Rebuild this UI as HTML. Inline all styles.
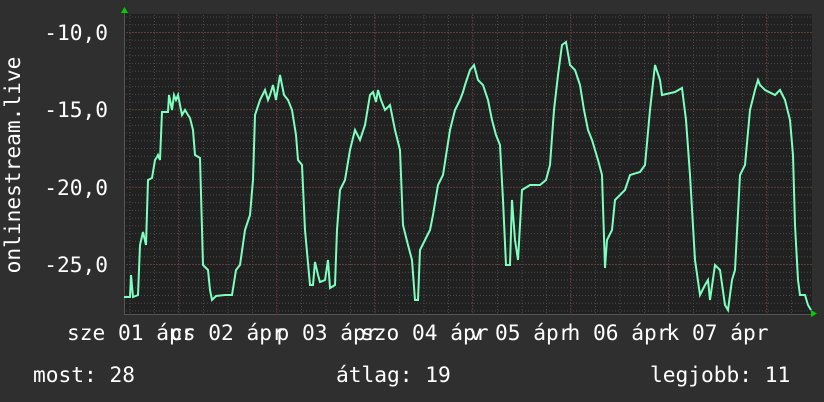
<!DOCTYPE html>
<html><head><meta charset="utf-8"><style>
html,body{margin:0;padding:0;background:#2f2f2f;}
body{width:824px;height:402px;position:relative;overflow:hidden;}
</style></head><body>
<svg width="824" height="402" style="position:absolute;left:0;top:0" font-family="DejaVu Sans Mono, Liberation Mono, monospace" font-size="21.2" fill="#fff">
<defs>
<pattern id="h" x="0" y="32" width="824" height="7.735" patternUnits="userSpaceOnUse">
<line x1="0" y1="0.5" x2="824" y2="0.5" stroke="#4a4a4a" stroke-width="1" stroke-dasharray="1,2"/>
</pattern>
<pattern id="v" x="129.5" y="0" width="24.5" height="402" patternUnits="userSpaceOnUse">
<line x1="0.5" y1="0" x2="0.5" y2="402" stroke="#4a4a4a" stroke-width="1" stroke-dasharray="1,2"/>
</pattern>
</defs>
<rect x="124" y="14" width="688" height="300" fill="#212121"/>
<rect x="124" y="14" width="688" height="300" fill="url(#h)"/>
<rect x="124" y="14" width="688" height="300" fill="url(#v)"/>
<g stroke="#6e3434" stroke-width="1" stroke-dasharray="1,2">
<line x1="124" y1="32.5" x2="812" y2="32.5"/>
<line x1="124" y1="109.5" x2="812" y2="109.5"/>
<line x1="124" y1="187.5" x2="812" y2="187.5"/>
<line x1="124" y1="264.5" x2="812" y2="264.5"/>
<line x1="178.5" y1="14" x2="178.5" y2="314"/>
<line x1="276.5" y1="14" x2="276.5" y2="314"/>
<line x1="374.5" y1="14" x2="374.5" y2="314"/>
<line x1="472.5" y1="14" x2="472.5" y2="314"/>
<line x1="570.5" y1="14" x2="570.5" y2="314"/>
<line x1="668.5" y1="14" x2="668.5" y2="314"/>
<line x1="766.5" y1="14" x2="766.5" y2="314"/>
</g>
<line x1="124" y1="314.5" x2="814" y2="314.5" stroke="#555"/>
<line x1="124.5" y1="12" x2="124.5" y2="314" stroke="#555"/>
<polygon points="121,13 128,13 124.5,7" fill="#00d000"/>
<polygon points="811,310 811,317 817,313.5" fill="#00d000"/>
<polyline fill="none" stroke="#7dffbf" stroke-width="2" points="124,297 130,297 131,275 133,297 138,295 140,245 143,232 146,245 148,180 152,178 155,160 157,157 158,155 160,160 162,112 168,112 169,95 172,110 174,95 176,100 178,95 180,105 182,115 185,110 188,115 190,118 193,130 195,155 200,158 203,265 206,268 208,270 210,290 212,300 216,296 225,295 232,295 236,270 240,265 245,230 250,215 253,180 255,115 260,100 265,90 268,100 270,95 273,85 276,100 280,75 282,85 284,95 288,100 292,110 296,135 298,160 302,165 305,230 310,285 313,285 315,262 318,275 320,282 325,280 328,260 330,288 335,285 337,230 340,190 345,180 350,150 355,130 360,140 365,125 370,95 373,92 376,102 378,90 381,100 385,110 390,105 395,130 400,150 403,225 408,245 412,260 415,300 418,300 420,250 425,240 430,230 433,215 438,185 443,175 450,130 455,110 460,100 463,92 465,85 470,70 474,65 478,80 483,85 488,100 492,120 496,135 500,145 503,200 506,265 510,265 512,200 515,240 518,260 522,190 530,185 540,185 546,180 550,165 554,110 558,75 562,45 566,42 570,65 575,70 580,85 584,110 588,130 592,140 598,160 602,175 605,268 607,240 612,230 615,200 620,195 625,190 630,175 640,172 645,165 650,110 655,65 660,80 662,95 675,92 682,88 686,120 690,175 695,260 700,295 705,285 708,280 710,300 715,265 720,270 725,305 728,310 732,280 735,270 740,175 745,165 750,110 755,90 758,80 760,85 765,90 775,95 780,90 785,100 790,120 793,155 795,225 798,280 800,295 805,295 808,305 811,310"/>
<text transform="translate(20,165) rotate(-90)" text-anchor="middle">onlinestream.live</text>
<g text-anchor="end">
<text x="108" y="40">-10,0</text>
<text x="108" y="117">-15,0</text>
<text x="108" y="195">-20,0</text>
<text x="108" y="272">-25,0</text>
</g>
<text x="67" y="340">sze 01 ápr</text>
<text x="170" y="340">cs 02 ápr</text>
<text x="276.5" y="340">p 03 ápr</text>
<text x="361" y="340">szo 04 ápr</text>
<text x="469.5" y="340">v 05 ápr</text>
<text x="567.5" y="340">h 06 ápr</text>
<text x="666.5" y="340">k 07 ápr</text>
<text x="33" y="382">most: 28</text>
<text x="336" y="382">átlag: 19</text>
<text x="650" y="382">legjobb: 11</text>
</svg>
</body></html>
